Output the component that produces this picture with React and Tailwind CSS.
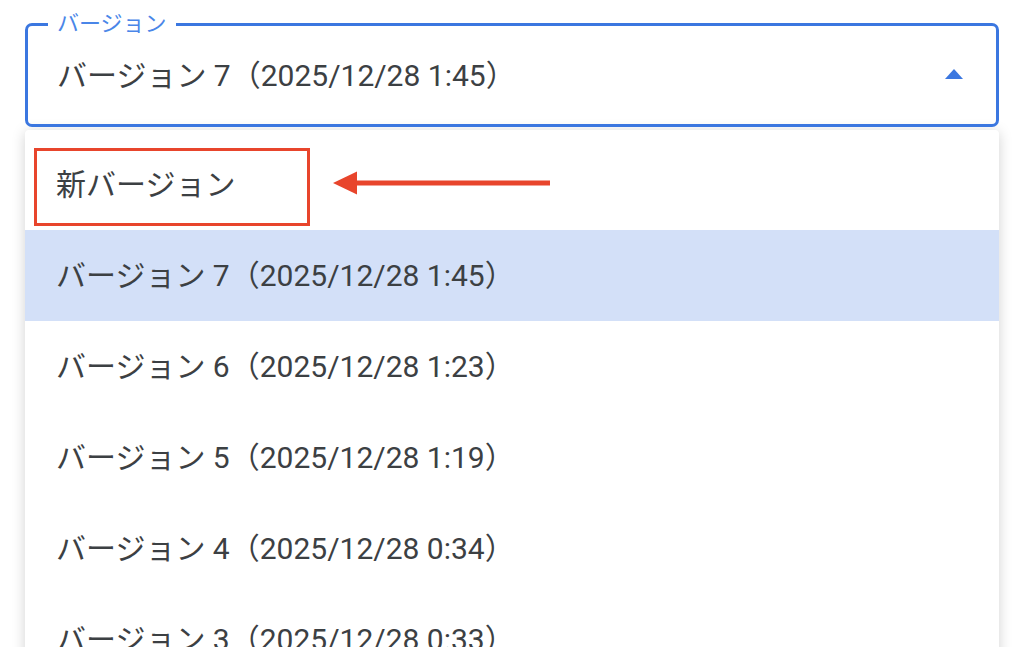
const versions = [
  { n: 7, t: '1:45' },
  { n: 6, t: '1:23' },
  { n: 5, t: '1:19' },
  { n: 4, t: '0:34' },
  { n: 3, t: '0:33' },
];

const font = "font-['Roboto','Noto_Sans_CJK_JP',sans-serif]";

export default function App() {
  const selected = 7;

  return (
    <div className={`h-[647px] w-[1024px] overflow-hidden bg-white ${font}`}>
      {/* select field */}
      <div className="relative mx-[25px] mt-[23px] flex h-[104px] items-center rounded-[7px] border-[3px] border-[#3b77e0] pl-[29px] pr-[33px]">
        <span className="absolute -top-[15px] left-[20px] bg-white px-[9px] text-[22px] leading-[26px] text-[#4a86e8]">
          バージョン
        </span>
        <span className="flex-1 text-[30px] text-[#3c4043]">
          バージョン 7（2025/12/28 1:45）
        </span>
        <svg width="18" height="10" viewBox="0 0 18 10" className="mb-[2px]">
          <path d="M0 10 L9 0 L18 10 Z" fill="#3b77e0" />
        </svg>
      </div>

      {/* menu */}
      <div className="mx-[25px] mt-[3px] rounded-t-[4px] bg-white pt-[9px] shadow-[0_2px_14px_rgba(0,0,0,0.18)]">
        <div className="relative flex h-[91px] items-center pl-[31px] text-[30px] text-[#3c4043]">
          新バージョン
          <div className="absolute left-[9px] top-[9px] h-[78px] w-[276px] border-[3px] border-[#e8452c]" />
          <svg width="220" height="24" viewBox="0 0 220 24" className="absolute left-[308px] top-[32px]">
            <path d="M0 12 L24 0.5 L24 23.5 Z" fill="#e8452c" />
            <rect x="22" y="9.5" width="195" height="5" fill="#e8452c" />
          </svg>
        </div>
        {versions.map((v) => (
          <div
            key={v.n}
            className={`flex h-[91px] items-center pl-[31px] text-[30px] text-[#3c4043] ${
              v.n === selected ? 'bg-[#d3e0f8]' : ''
            }`}
          >
            バージョン {v.n}（2025/12/28 {v.t}）
          </div>
        ))}
      </div>
    </div>
  );
}
